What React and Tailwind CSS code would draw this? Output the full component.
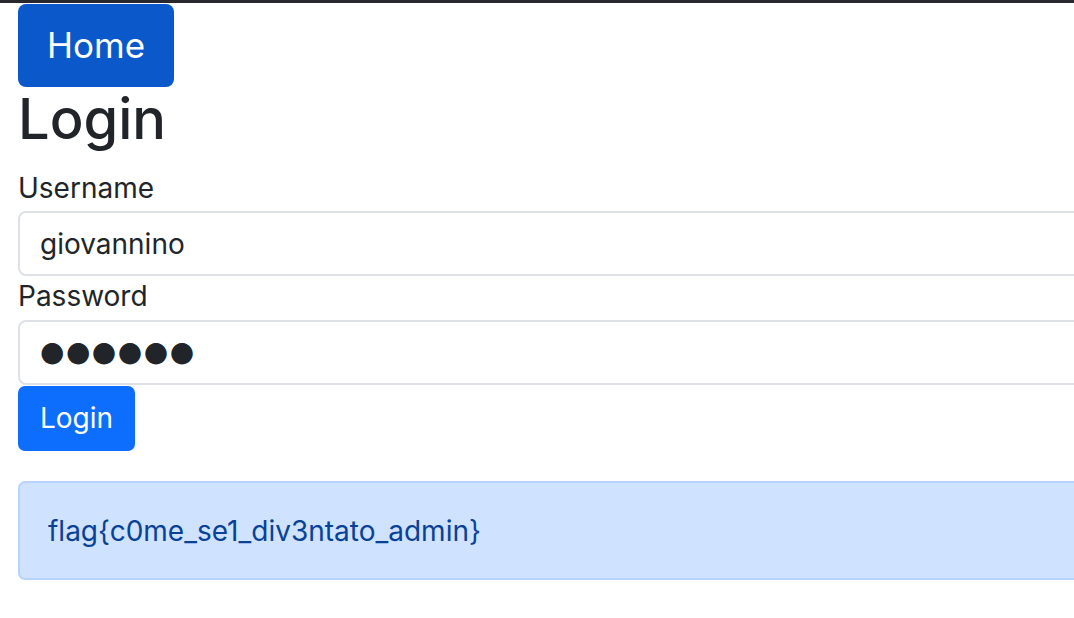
export default function App() {
  return (
    <div className="min-h-[618px] w-full overflow-hidden bg-white font-['Inter',sans-serif] text-[#212529]">
      <div className="h-[3px] bg-[#28282e]" />
      <div className="w-[1400px] pl-[18px]">
        <button className="mt-[1px] h-[83px] rounded-[8px] bg-[#0a58ca] px-[29px] text-[35px] leading-[51px] text-white">
          Home
        </button>
        <h1 className="mb-[17px] text-[56px] leading-[64px] font-medium">Login</h1>
        <form className="flex flex-col" onSubmit={(e) => e.preventDefault()}>
          <label htmlFor="username" className="block h-[41px] text-[28px] leading-[41px]">
            Username
          </label>
          <input
            id="username"
            type="text"
            defaultValue="giovannino"
            className="mt-[2px] block h-[65px] w-full rounded-[8px] border-2 border-[#dee2e6] bg-white px-[20px] text-[28px] text-[#212529] outline-none"
          />
          <label htmlFor="password" className="block h-[41px] text-[28px] leading-[41px]">
            Password
          </label>
          {/* masked value drawn as large discs, like the browser does here */}
          <input
            id="password"
            type="text"
            readOnly
            value="●●●●●●"
            className="mt-[3px] block h-[65px] w-full rounded-[8px] border-2 border-[#dee2e6] bg-white px-[20px] pb-[3px] font-['DejaVu_Sans',sans-serif] text-[28px] tracking-[1.5px] text-[#212529] outline-none"
          />
          <div>
            <button
              type="submit"
              className="mt-[1px] h-[65px] rounded-[7px] bg-[#0d6efd] px-[22px] text-[28px] leading-[41px] text-white"
            >
              Login
            </button>
          </div>
        </form>
        <div className="mt-[30px] flex h-[99px] items-center rounded-[7px] border-2 border-[#b6d4fe] bg-[#cfe2ff] px-[28px] text-[28px] text-[#084298]">
          flag{'{'}c0me_se1_div3ntato_admin{'}'}
        </div>
      </div>
    </div>
  );
}
